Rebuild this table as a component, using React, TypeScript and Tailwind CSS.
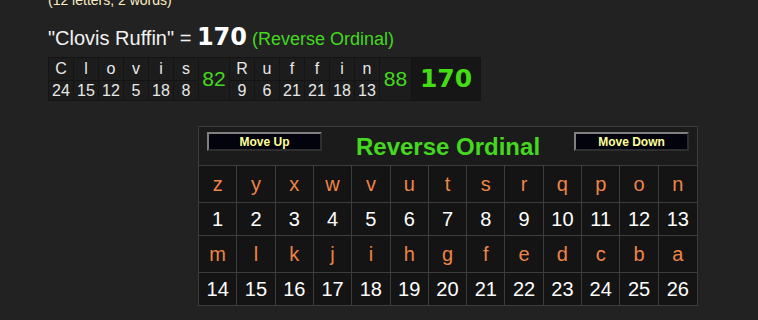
import React from "react";

const word1 = [
  ["C", 24],
  ["l", 15],
  ["o", 12],
  ["v", 5],
  ["i", 18],
  ["s", 8],
] as const;
const word2 = [
  ["R", 9],
  ["u", 6],
  ["f", 21],
  ["f", 21],
  ["i", 18],
  ["n", 13],
] as const;

const row1 = "zyxwvutsrqpon".split("");
const row2 = "mlkjihgfedcba".split("");

function LetterCol({ l, n }: { l: string; n: number }) {
  return (
    <div className="flex w-[25px] flex-col border-r border-[#141414]">
      <div className="flex h-[23px] items-center justify-center border-b border-[#141414] text-[16px] text-[#e8e8e8]">
        {l}
      </div>
      <div className="flex h-[19px] items-center justify-center text-[16px] text-[#e8e8e8]">
        {n}
      </div>
    </div>
  );
}

function GridRow({
  items,
  letter,
  last,
}: {
  items: (string | number)[];
  letter: boolean;
  last?: boolean;
}) {
  return (
    <div
      className={`grid grid-cols-[repeat(13,minmax(0,1fr))] ${
        letter ? "h-[37px]" : last ? "h-[32px]" : "h-[33px]"
      } ${last ? "" : "border-b border-[#3d3d3d]"}`}
    >
      {items.map((it, i) => (
        <div
          key={i}
          className={`flex items-center justify-center text-[20px] ${
            i < 12 ? "border-r border-[#3d3d3d]" : ""
          } ${letter ? "text-[#ee8447]" : "text-white"}`}
        >
          {it}
        </div>
      ))}
    </div>
  );
}

function Btn({ label }: { label: string }) {
  return (
    <div className="flex h-[19px] w-[115px] items-center justify-center border-2 border-t-[#808080] border-l-[#808080] border-b-[#2e2e2e] border-r-[#2e2e2e] bg-[#03030e] text-[12px] font-bold leading-none text-[#ffff99]">
      {label}
    </div>
  );
}

export default function App() {
  return (
    <div className="flex min-h-screen flex-col bg-[#222222] pl-[48px] font-['Liberation_Sans',Arial,sans-serif]">
      <div className="-mt-[8px] h-[16px] text-[14px] leading-[16px] text-[#fbeec4]">
        (12 letters, 2 words)
      </div>
      <div className="mt-[17px] flex h-[32px] items-baseline whitespace-pre">
        <span className="text-[20px] leading-none text-[#f2f2f2]">
          "Clovis Ruffin" ={" "}
        </span>
        <span className="font-['DejaVu_Sans',sans-serif] text-[24px] font-bold leading-none text-white">
          170
        </span>
        <span className="text-[18px] leading-none text-[#44d81f]"> (Reverse Ordinal)</span>
      </div>

      <div className="flex self-start border border-[#141414] bg-[#1c1c1c]">
        {word1.map(([l, n], i) => (
          <LetterCol key={i} l={l} n={n} />
        ))}
        <div className="flex w-[31px] items-center justify-center border-r border-[#141414] text-[21px] text-[#44d81f]">
          82
        </div>
        {word2.map(([l, n], i) => (
          <LetterCol key={i} l={l} n={n} />
        ))}
        <div className="flex w-[32px] items-center justify-center border-r border-[#141414] text-[21px] text-[#44d81f]">
          88
        </div>
        <div className="flex w-[68px] items-center justify-center bg-[#161616] font-['DejaVu_Sans',sans-serif] text-[25px] font-bold text-[#44dd14]">
          170
        </div>
      </div>

      <div className="ml-[150px] mt-[25px] w-[500px] self-start border border-[#3d3d3d] bg-[#141414]">
        <div className="flex h-[39px] items-start justify-between border-b border-[#3d3d3d] bg-[#1b1b1b] px-[8px] pt-[5px]">
          <Btn label="Move Up" />
          <div className="mt-[3px] h-[24px] text-[24px] font-bold leading-[24px] text-[#44d81f]">
            Reverse Ordinal
          </div>
          <Btn label="Move Down" />
        </div>
        <GridRow items={row1} letter />
        <GridRow items={Array.from({ length: 13 }, (_, i) => i + 1)} letter={false} />
        <GridRow items={row2} letter />
        <GridRow items={Array.from({ length: 13 }, (_, i) => i + 14)} letter={false} last />
      </div>
    </div>
  );
}
